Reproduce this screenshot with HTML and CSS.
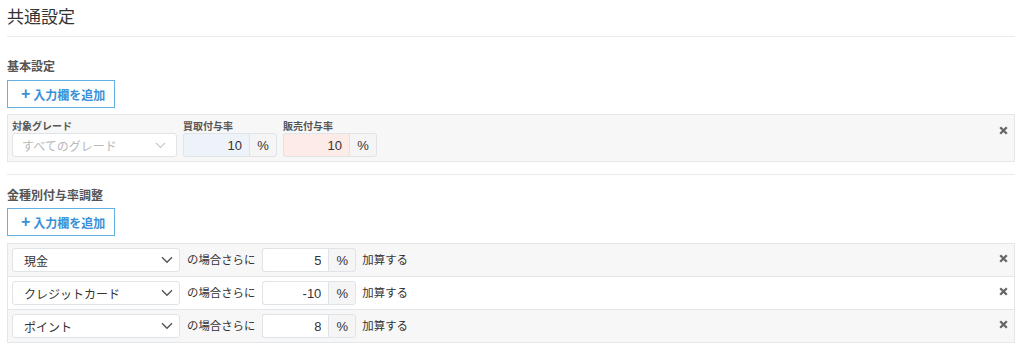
FILE: index.html
```html
<!DOCTYPE html>
<html lang="ja">
<head>
  <meta charset="UTF-8" />
  <title>共通設定</title>
  <link rel="stylesheet" href="styles.css">
</head>
<body>
  <div class="page">
    <h1 class="title">共通設定</h1>

    <section class="block first">
      <h2 class="block-title">基本設定</h2>
      <button class="add-btn"><span class="plus">+</span>入力欄を追加</button>
      <div class="panel">
        <div class="row base-row">
          <div class="field">
            <label>対象グレード</label>
            <div class="select placeholder grade">
              <span>すべてのグレード</span>
              <svg class="chev" width="11" height="7" viewBox="0 0 11 7"><path d="M1 1l4.5 4.5L10 1" fill="none" stroke="currentColor" stroke-width="1.1"/></svg>
            </div>
          </div>
          <div class="field">
            <label>買取付与率</label>
            <div class="group">
              <input class="num buy" value="10">
              <span class="addon">%</span>
            </div>
          </div>
          <div class="field">
            <label>販売付与率</label>
            <div class="group">
              <input class="num sell" value="10">
              <span class="addon">%</span>
            </div>
          </div>
          <button class="close top"><svg width="9" height="9" viewBox="0 0 9 9"><path d="M1.2 1.2l6.6 6.6M7.8 1.2L1.2 7.8" stroke="currentColor" stroke-width="2.3"/></svg></button>
        </div>
      </div>
    </section>

    <section class="block second">
      <h2 class="block-title">金種別付与率調整</h2>
      <button class="add-btn"><span class="plus">+</span>入力欄を追加</button>
      <div class="panel list">
        <div class="row adj-row">
          <div class="select kind"><span>現金</span><svg class="chev" width="12" height="8" viewBox="0 0 12 8"><path d="M1 1.2l5 5 5-5" fill="none" stroke="currentColor" stroke-width="1.4"/></svg></div>
          <span class="txt">の場合さらに</span>
          <div class="group"><input class="num" value="5"><span class="addon">%</span></div>
          <span class="txt after">加算する</span>
          <button class="close"><svg width="9" height="9" viewBox="0 0 9 9"><path d="M1.2 1.2l6.6 6.6M7.8 1.2L1.2 7.8" stroke="currentColor" stroke-width="2.3"/></svg></button>
        </div>
        <div class="row adj-row">
          <div class="select kind"><span>クレジットカード</span><svg class="chev" width="12" height="8" viewBox="0 0 12 8"><path d="M1 1.2l5 5 5-5" fill="none" stroke="currentColor" stroke-width="1.4"/></svg></div>
          <span class="txt">の場合さらに</span>
          <div class="group"><input class="num" value="-10"><span class="addon">%</span></div>
          <span class="txt after">加算する</span>
          <button class="close"><svg width="9" height="9" viewBox="0 0 9 9"><path d="M1.2 1.2l6.6 6.6M7.8 1.2L1.2 7.8" stroke="currentColor" stroke-width="2.3"/></svg></button>
        </div>
        <div class="row adj-row">
          <div class="select kind"><span>ポイント</span><svg class="chev" width="12" height="8" viewBox="0 0 12 8"><path d="M1 1.2l5 5 5-5" fill="none" stroke="currentColor" stroke-width="1.4"/></svg></div>
          <span class="txt">の場合さらに</span>
          <div class="group"><input class="num" value="8"><span class="addon">%</span></div>
          <span class="txt after">加算する</span>
          <button class="close"><svg width="9" height="9" viewBox="0 0 9 9"><path d="M1.2 1.2l6.6 6.6M7.8 1.2L1.2 7.8" stroke="currentColor" stroke-width="2.3"/></svg></button>
        </div>
      </div>
    </section>
  </div>
</body>
</html>
```

FILE: styles.css
```css
* { box-sizing: border-box; margin: 0; padding: 0; }
body {
  background: #fff;
  color: #333;
  font-family: "Liberation Sans", "Noto Sans CJK JP", sans-serif;
  font-size: 12px;
}
.page { margin: 0 9px 0 7px; }

.title {
  font-size: 17px;
  font-weight: normal;
  line-height: 24px;
  padding: 6px 0 6px;
  border-bottom: 1px solid #e8eaee;
}

.block.first { padding-top: 22px; }
.block.second { border-top: 1px solid #e8eaee; margin-top: 12px; padding-top: 13px; }
.block-title {
  font-size: 12px;
  font-weight: bold;
  color: #555;
  line-height: 16px;
  margin-bottom: 4px;
}
.block.first .block-title { margin-bottom: 5px; }

.add-btn {
  display: flex; align-items: center;
  height: 28px; width: 108px;
  padding: 0 0 0 13px;
  background: #fff;
  border: 1px solid #62b0e6;
  color: #3a90d6;
  font: bold 12px "Liberation Sans", "Noto Sans CJK JP", sans-serif;
  cursor: pointer;
}
.plus { font-size: 16px; margin-right: 3px; line-height: 1; }

.panel {
  margin-top: 6px;
  background: #f7f7f7;
  border: 1px solid #e3e6ea;
}
.panel.list { margin-top: 7px; }
.row { display: flex; align-items: flex-start; padding: 4px; }
.base-row { gap: 6px; padding-top: 5px; }
.field label {
  display: block;
  font-size: 10px;
  font-weight: bold;
  color: #555;
  line-height: 13px;
}

.select {
  display: flex; align-items: center; justify-content: space-between;
  height: 24px;
  background: #fff;
  border: 1px solid #dfe4e8;
  border-radius: 3px;
  color: #333;
  font-size: 12px;
  padding: 0 8px 0 11px;
}
.select.grade { width: 165px; padding-left: 9px; padding-right: 10px; }
.select.placeholder { color: #b8b8b8; }
.select.placeholder .chev { color: #c8c8c8; }
.select.kind { width: 168px; padding-right: 6px; }
.chev { color: #555; }

.group { display: flex; height: 24px; }
.num {
  width: 66px; height: 24px;
  border: 1px solid #dfe4e8;
  border-right: none;
  border-radius: 3px 0 0 3px;
  background: #fff;
  text-align: right;
  padding-right: 7px;
  font: 13px "Liberation Sans", sans-serif;
  color: #333;
}
.num.buy { background: #eef3f9; }
.num.sell { background: #fdebe8; }
.addon {
  width: 28px;
  display: flex; align-items: center; justify-content: center;
  background: #f5f5f5;
  border: 1px solid #dfe4e8;
  border-radius: 0 3px 3px 0;
  font-size: 13px;
  color: #333;
}

.list .row { align-items: center; }
.list .row:nth-child(even) { background: #fff; }
.list .row + .row { border-top: 1px solid #e3e6ea; }
.txt { margin: 0 7px; line-height: 24px; font-size: 11.4px; }
.txt.after { margin: 0 0 0 6px; }

.close {
  margin-left: auto;
  margin-right: 2px;
  background: none; border: none;
  color: #666;
  display: flex;
  cursor: pointer;
}
.close.top { margin-top: 6px; }
.list .close { margin-top: -3px; }
```
